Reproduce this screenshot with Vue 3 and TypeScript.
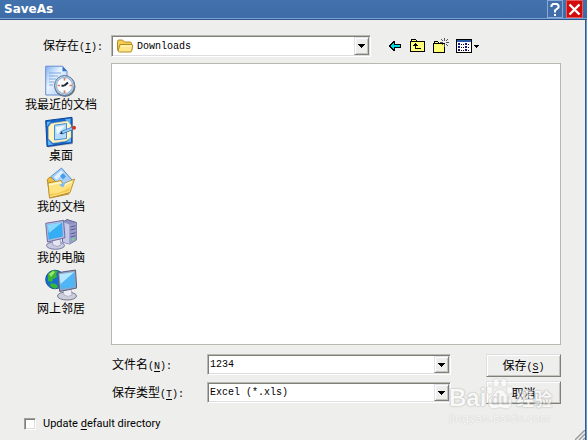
<script setup lang="ts">
import { ref } from 'vue'

interface Place {
  id: string
  name: string
}

const places: Place[] = [
  { id: 'recent', name: '我最近的文档' },
  { id: 'desktop', name: '桌面' },
  { id: 'documents', name: '我的文档' },
  { id: 'computer', name: '我的电脑' },
  { id: 'network', name: '网上邻居' },
]

const folder = ref('Downloads')
const fileName = ref('1234')
const fileType = ref('Excel (*.xls)')
const updateDefault = ref(false)
</script>

<template>
  <main class="dialog">
    <header class="titlebar">
      <h1 class="title">SaveAs</h1>
      <button class="caption help" type="button" aria-label="Help">
        <svg width="14" height="15" viewBox="0 0 14 15"><path d="M3.500 5V3.500L5 2h4l1.500 1.500v2L7 8.500v2M7 12v2" fill="none" stroke="#fff" stroke-width="2" /></svg>
      </button>
      <button class="caption close" type="button" aria-label="Close">
        <svg width="15" height="15" viewBox="0 0 15 15"><path d="M2.500 2.500l10 10M12.500 2.500l-10 10" stroke="#fff" stroke-width="2.400" /></svg>
      </button>
    </header>

    <form class="body" @submit.prevent>
      <div class="toolbar">
        <label class="text look" for="folder">保存在<span class="mono">(<u>I</u>):</span></label>
        <div class="combo location">
          <svg class="folder" width="18" height="16" viewBox="0 0 18 16">
            <path d="M1.500 3.500Q1.500 2 3 2h3.500l2 2H14q1.500 0 1.500 1.500V13H3Q1.500 13 1.500 11.500Z" fill="#f3ce55" stroke="#b58a20" />
            <path d="M4 6.500h11.500q1.500 0 1.200 1.300l-1 5q-.3 1.200-1.500 1.200H3.500Q2 14 2.200 12.500Z" fill="#ffe68a" stroke="#b58a20" />
            <path d="M5 8h10" stroke="#fff8cd" />
          </svg>
          <select id="folder" v-model="folder" class="field mono"><option>Downloads</option></select>
          <span class="drop"><svg width="7" height="4" viewBox="0 0 7 4"><path d="M0 0h7v1H6v1H5v1H4v1H3V3H2V2H1V1H0z" /></svg></span>
        </div>
        <div class="tools">
          <button class="tool" type="button" aria-label="Back">
            <svg width="16" height="16" viewBox="0 0 16 16" shape-rendering="crispEdges"><path d="M1 8l5-5h2v3h6v4H8v3H6z" fill="#000" /><path d="M3 8l4-4v3h6v2H7v3z" fill="#00e0e0" /></svg>
          </button>
          <button class="tool" type="button" aria-label="Up one level">
            <svg width="16" height="16" viewBox="0 0 16 16" shape-rendering="crispEdges"><path d="M.5 13.500V3.500l1-1v-1h4l1 1v1h8v10z" fill="#ffff78" stroke="#000" /><path d="M1 3.500h5" stroke="#000" /><path d="M5 5h1v1h1v1h1v1H6v2h5v1H5V8H3V7h1V6h1z" fill="#000" /></svg>
          </button>
          <button class="tool" type="button" aria-label="New folder">
            <svg width="16" height="16" viewBox="0 0 16 16" shape-rendering="crispEdges"><path d="M.5 14.500v-9l1-1v-1h3l1 1v1h6v9z" fill="#ffff78" stroke="#000" /><path d="M1 5.500h5" stroke="#000" /><path d="M11 0h1v3h-1zM11 6h1v3h-1zM7 4h3v1H7zM13 4h3v1h-3zM8 1h1v1H8zM9 2h1v1H9zM14 1h1v1h-1zM13 2h1v1h-1zM13 6h1v1h-1zM14 7h1v1h-1zM9 6h1v1H9z" fill="#555" /></svg>
          </button>
          <button class="tool" type="button" aria-label="Views">
            <svg width="24" height="16" viewBox="0 0 24 16" shape-rendering="crispEdges">
              <path d="M.5 1.500h15v13H.5z" fill="#fff" stroke="#000" /><path d="M1 2h14v2H1z" fill="#245da5" />
              <path d="M2 5h2v2H2zM2 8h2v2H2zM2 11h2v2H2zM9 5h2v2H9zM9 8h2v2H9zM9 11h2v2H9z" fill="#151580" />
              <path d="M5 6h1v1H5zM7 6h1v1H7zM12 6h1v1h-1zM5 9h1v1H5zM7 9h1v1H7zM12 9h1v1h-1zM5 12h1v1H5zM7 12h1v1H7zM12 12h1v1h-1z" fill="#000" />
              <path d="M18 7h5v1h-1v1h-1v1h-1V9h-1V8h-1z" />
            </svg>
          </button>
        </div>
      </div>

      <nav class="places" aria-label="Places">
        <button v-for="place in places" :key="place.id" type="button" class="place text">
          <svg v-if="place.id === 'recent'" width="32" height="32" viewBox="0 0 32 32">
            <defs>
              <linearGradient id="sheet" x2="1" y2="1"><stop stop-color="#7fb2f2" /><stop offset=".4" stop-color="#e8f3ff" /><stop offset="1" stop-color="#a8c8f5" /></linearGradient>
            </defs>
            <path d="M.7 1.200h16.800l4.500 5V30H.7z" fill="url(#sheet)" stroke="#6b8dd0" />
            <path d="M17.500 1.200v5H22z" fill="#2f70cf" />
            <path d="M4 8h12M4 11h9M4 14h7M4 17h5M4 20h4" stroke="#7da5df" stroke-width="1.200" />
            <circle cx="20" cy="21.500" r="10.500" fill="#6e7682" />
            <circle cx="19.500" cy="20.500" r="10" fill="#b9cde2" stroke="#59789b" />
            <circle cx="19.500" cy="20.500" r="8" fill="#f8fcff" stroke="#8bb4d7" />
            <path d="M19.500 20.500l3.500-3M19.500 20.500l-3 .3" stroke="#172536" stroke-width="2" />
            <path d="M19.500 13v2.500M19.500 25.500V28M12.500 20.500H15M24.500 20.500H27" stroke="#ee7652" stroke-width="1.700" />
          </svg>
          <svg v-else-if="place.id === 'desktop'" width="32" height="32" viewBox="0 0 32 32">
            <path d="M2 6L28 2.500V28L3 31.500z" fill="#808b9a" opacity=".6" />
            <path d="M.7 4.700L27 1.300v25.500L2 30.500z" fill="#1766c8" stroke="#0b469c" />
            <path d="M2 6l4-.6-4 5zM20 3.200l5.500-.7V8zM2.800 23.500L8 28.700l-5 .6zM21 26.500l5-5v4.500z" fill="#61b4fb" />
            <path d="M6 7.500L22.500 5l3.500 4v12.500L21 25 8 27l-4.500-4V11z" fill="#fff4c2" stroke="#c7c99c" stroke-width=".6" />
            <path d="M9.500 9.200l12-1.700v15l-12 1.500z" fill="#b7dcff" stroke="#438fd6" />
            <path d="M11 11l9-1.200-8 9z" fill="#eef8ff" />
            <path d="M16 17l11-4.500" stroke="#28609f" stroke-width="3.400" />
            <path d="M17 16.500l10-4" stroke="#8dcafa" stroke-width="2" />
            <path d="M14.500 18l2.700-2.400v2.200z" fill="#222" />
            <circle cx="29" cy="11.700" r="2" fill="#cf352a" />
          </svg>
          <svg v-else-if="place.id === 'documents'" width="32" height="32" viewBox="0 0 32 32">
            <path d="M2.300 12.500l2.500-2.500 4 2 14-2.500 4 3.500-3 14L5 31z" fill="#eebd3d" stroke="#bb8a22" />
            <path d="M6 9.500L16.500 1l11.500 13-9.500 9.500z" fill="#a8d1fa" stroke="#5a91cb" />
            <path d="M9 10l7.300-6.500L19 6l-7.500 7z" fill="#e0f1ff" />
            <path d="M15 9l3-3 3 3.500-3 3z" fill="#4e9be8" />
            <path d="M3 16l13-2.500 2 3.500 11.500-5L25 25.500 4.500 31z" fill="#ffe37e" stroke="#bd9130" />
            <path d="M4 18l11-2.500 2.500 3L27 14.500" fill="none" stroke="#fff8cb" stroke-width="1.500" />
            <path d="M14 18l4-2 3.500-1.500-3.500 6z" fill="#83baf0" />
            <path d="M5 29l19-5 1-4q-7 6-20 7z" fill="#f5c64d" />
          </svg>
          <svg v-else-if="place.id === 'computer'" width="32" height="32" viewBox="0 0 32 32">
            <path d="M18 4l4-2.500 9.500 3V22l-7 4-7-2z" fill="#8e91be" stroke="#62679a" />
            <path d="M18 4l6.500 2.500V26L18 24z" fill="#c7c9e9" />
            <path d="M24.500 6.500l7-2V22l-7 4z" fill="#9a9cca" />
            <path d="M25.500 9l5-1.300M25.500 12l5-1.300M25.500 16l5-1.300M25.500 19l5-1.300" stroke="#555a91" />
            <circle cx="28" cy="21.500" r="1.200" fill="#64e37b" />
            <ellipse cx="10.500" cy="27.500" rx="9" ry="3.800" fill="#c9c9e0" stroke="#777ba3" />
            <path d="M7 22l8-1 1 6q-4 3-8 0z" fill="#e5e5f4" stroke="#8d90b0" stroke-width=".7" />
            <path d="M.7 5.300l17.800-3 1.500 17.500L2.500 24z" fill="#b8b8dc" stroke="#6c70a2" />
            <path d="M2.300 6.800l14.700-2.300 1 14-14.300 3.200z" fill="#35adf4" />
            <path d="M2.300 6.800l14.700-2.300L4 15z" fill="#8bd8ff" />
          </svg>
          <svg v-else width="32" height="32" viewBox="0 0 32 32">
            <circle cx="10" cy="10.500" r="9.300" fill="#166fcf" stroke="#164c9c" />
            <path d="M3 5l5-4 5 1-2 3 1 3-4 2-1 3-4-1zM6 14l5 1 2 3-3 2-5-3z" fill="#38b634" />
            <path d="M4 5l4-3 2 1-4 5z" fill="#9ee66d" />
            <ellipse cx="22" cy="27" rx="9.500" ry="4" fill="#ceceda" stroke="#73788e" />
            <path d="M18 21l8-1 1 6q-4 3-8 0z" fill="#ececf5" stroke="#999eb5" stroke-width=".7" />
            <path d="M13 3.700L30.500 1l1.200 18-17 3.500z" fill="#9da3ba" stroke="#545f80" />
            <path d="M14.500 5.200L29.300 3l1 14.800-14.200 2.800z" fill="#50b5f5" />
            <path d="M14.500 5.200L29.300 3 15.600 15z" fill="#b3e8ff" />
          </svg>
          <span>{{ place.name }}</span>
        </button>
      </nav>

      <section class="files" aria-label="Files"></section>

      <div class="entry">
        <div class="fields">
          <label class="text" for="file-name">文件名<span class="mono">(<u>N</u>):</span></label>
          <div class="combo">
            <input id="file-name" v-model="fileName" class="field mono" type="text" />
            <button class="drop" type="button" aria-label="Recent names"><svg width="7" height="4" viewBox="0 0 7 4"><path d="M0 0h7v1H6v1H5v1H4v1H3V3H2V2H1V1H0z" /></svg></button>
          </div>
          <label class="text" for="file-type">保存类型<span class="mono">(<u>T</u>):</span></label>
          <div class="combo">
            <select id="file-type" v-model="fileType" class="field mono"><option>Excel (*.xls)</option></select>
            <span class="drop"><svg width="7" height="4" viewBox="0 0 7 4"><path d="M0 0h7v1H6v1H5v1H4v1H3V3H2V2H1V1H0z" /></svg></span>
          </div>
        </div>
        <div class="actions">
          <button class="action text" type="submit">保存<span class="mono">(<u>S</u>)</span></button>
          <button class="action text" type="button">取消</button>
          <div class="watermark" aria-hidden="true">
            <div class="brand">
              <span>Bai</span>
              <span class="paw">
                <svg width="28" height="34" viewBox="0 0 29 34">
                  <g fill="#fff" stroke="#bbb" stroke-width=".7">
                    <ellipse cx="4" cy="13" rx="3.200" ry="4.200" /><ellipse cx="10.500" cy="5.500" rx="3.200" ry="4.500" />
                    <ellipse cx="18.500" cy="5.500" rx="3.200" ry="4.500" /><ellipse cx="24.500" cy="13" rx="3.200" ry="4.200" />
                    <path d="M14.500 12c4 0 5 4 8 7s5 5 4 9-5 5-8 4-5-1-8 0-7 0-8-4 1-6 4-9 4-7 8-7z" />
                  </g>
                </svg>
                <span class="du">du</span>
              </span>
              <span class="cjk">经验</span>
            </div>
            <div class="site">jingyan.baidu.com</div>
          </div>
        </div>
      </div>

      <label class="update"><input v-model="updateDefault" type="checkbox" /><span>Update <u>d</u>efault directory</span></label>
    </form>
    <svg class="grip" width="10" height="10" viewBox="0 0 10 10"><path d="M0 10L10 0M4 10l6-6M8 10l2-2" stroke="#999" stroke-width="1.400" /></svg>
  </main>
</template>

<style>
body {
  margin: 0;
}
</style>

<style scoped>
.dialog {
  position: relative;
  display: flex;
  flex-direction: column;
  box-sizing: border-box;
  min-height: 100vh;
  background: #eeeeec;
  color: #000;
  font-family: "Liberation Sans", "Noto Sans CJK SC", sans-serif;
}
.dialog button,
.dialog input,
.dialog select {
  box-sizing: border-box;
  margin: 0;
  color: #000;
}
.titlebar {
  display: flex;
  align-items: flex-start;
  gap: 3px;
  box-sizing: border-box;
  height: 20px;
  padding: 0 4px;
  background: linear-gradient(#4272ad, #3e6ba5);
  border-bottom: 1px solid #2c538c;
  box-shadow: inset 0 -1px #79a2d6;
}
.title {
  flex: 1;
  margin: 0;
  color: #fff;
  font: bold 12px/18px "DejaVu Sans", sans-serif;
}
.dialog .caption {
  display: grid;
  place-items: center;
  width: 16px;
  height: 18px;
  padding: 0;
  border: 1px solid #86aad7;
  background: #416da8;
}
.dialog .close {
  width: 17px;
  border-color: #e55a5a;
  background: #d40b0b;
}
.body {
  flex: 1;
  display: grid;
  grid-template-columns: 100px 1fr;
  grid-template-rows: auto 1fr auto auto;
  padding: 15px 25px 10px 11px;
  border-right: 1px solid #6797d3;
  box-shadow: inset -1px 0 #2f5b98;
}
.text {
  font-family: "Noto Sans CJK SC", sans-serif;
  font-size: 12px;
  line-height: 15px;
  white-space: nowrap;
}
.mono {
  font-family: "Liberation Mono", monospace;
  font-size: 10px;
  white-space: pre;
}
u {
  text-underline-offset: 2px;
}
.toolbar {
  grid-column: 1 / -1;
  display: flex;
  align-items: center;
  margin-bottom: 6px;
}
.look {
  box-sizing: border-box;
  width: 100px;
  padding-right: 8px;
  text-align: right;
}
.combo {
  display: flex;
  align-items: stretch;
  box-sizing: border-box;
  height: 21px;
  padding: 1px;
  border: 1px solid;
  border-color: #b8b8b2 #fff #fff #b8b8b2;
  background: #fff;
  box-shadow: inset 1px 1px #808078, inset -1px -1px #dedee2;
}
.location {
  flex: 0 1 260px;
  height: 22px;
}
.folder {
  margin: 1px 2px 0 3px;
}
.field {
  flex: 1;
  min-width: 0;
  padding: 0 1px;
  border: 0;
  border-radius: 0;
  background: transparent;
  appearance: none;
  outline: none;
}
.drop {
  display: grid;
  place-items: center;
  box-sizing: border-box;
  width: 15px;
  padding: 0;
  border: 1px solid;
  border-color: #e2e2e6 #80807a #80807a #e2e2e6;
  background: #eeeeec;
  box-shadow: inset 1px 1px #fff, inset -1px -1px #c4c4bc;
  pointer-events: none;
}
.tools {
  display: flex;
  gap: 7px;
  margin-left: 16px;
}
.tool {
  display: block;
  padding: 0;
  border: 0;
  background: none;
}
.tool svg,
.place svg {
  display: block;
}
.places {
  grid-row: 2 / 4;
  display: flex;
  flex-direction: column;
  gap: 6px;
  padding-top: 2px;
}
.place {
  display: flex;
  flex-direction: column;
  align-items: center;
  padding: 0;
  border: 0;
  background: none;
  line-height: 13px;
}
.files {
  border: 1px solid #b8b8b0;
  background: #fff;
}
.entry {
  display: flex;
  gap: 35px;
  margin-top: 9px;
}
.fields {
  flex: 1;
  display: grid;
  grid-template-columns: 95px 1fr;
  align-content: start;
  align-items: center;
  row-gap: 7px;
  padding-left: 1px;
}
.actions {
  position: relative;
  display: flex;
  flex-direction: column;
  gap: 4px;
  width: 75px;
}
.action {
  height: 23px;
  padding: 0;
  border: 1px solid;
  border-color: #dedee4 #80807a #80807a #dedee4;
  background: #eeeeec;
  box-shadow: inset 1px 1px #fff, inset -1px -1px #c4c4bc;
}
.watermark {
  position: absolute;
  left: -37px;
  top: 23px;
  color: #fff;
  opacity: 0.6;
  white-space: nowrap;
  pointer-events: none;
  text-shadow: 0 0 2px #888, 0 0 1px #999;
}
.brand {
  display: flex;
  align-items: flex-end;
  height: 34px;
  font: bold 24px/26px "Liberation Sans", sans-serif;
}
.paw {
  display: grid;
  place-items: end center;
}
.paw > * {
  grid-area: 1 / 1;
}
.du {
  color: #ccc;
  font-size: 16px;
  line-height: 22px;
  text-shadow: none;
}
.cjk {
  padding-left: 2px;
  font-family: "Noto Sans CJK SC", sans-serif;
  font-size: 18px;
}
.site {
  font: 11px/16px "DejaVu Sans", sans-serif;
  text-shadow: 0 0 1px #999;
}
.update {
  grid-column: 1 / -1;
  display: flex;
  align-items: center;
  justify-self: start;
  gap: 7px;
  height: 13px;
  margin: 13px 0 0 13px;
  font: 11px/13px Roboto, sans-serif;
}
.update input {
  width: 12px;
  height: 12px;
  border: 1px solid;
  border-color: #a0a09a #fff #fff #a0a09a;
  background: #fff;
  box-shadow: inset 1px 1px #808078, inset -1px -1px #dedee2;
  appearance: none;
}
.update input:checked {
  background: #333;
}
.grip {
  position: absolute;
  right: 2px;
  bottom: 0;
}
</style>
